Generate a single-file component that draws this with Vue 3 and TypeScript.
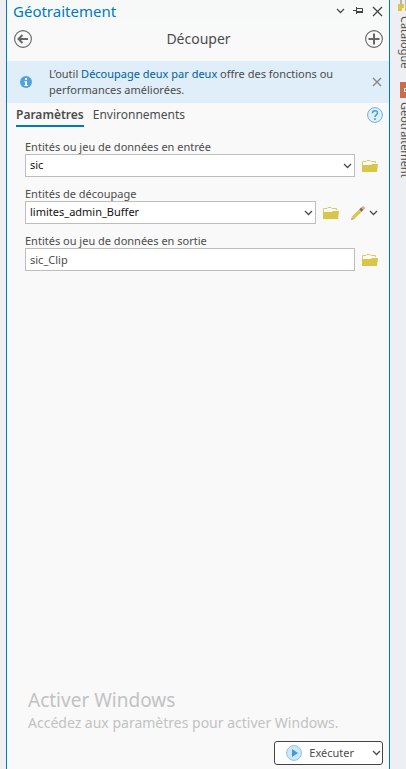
<script setup lang="ts">
import { ref } from 'vue'

const input = ref('sic')
const clip = ref('limites_admin_Buffer')
const output = ref('sic_Clip')
const activeTab = ref('Paramètres')
const tabs: string[] = ['Paramètres', 'Environnements']
const showNotice = ref(true)
</script>

<template>
  <svg class="defs" aria-hidden="true">
    <symbol id="folder" viewBox="0 0 16 12">
      <path d="M0.500 11V1.500H4L5 .5H8L9 1.500H13.500V3" fill="none" stroke="#dccb62" />
      <path d="M0 12V5H9L10 4H16L15 12Z" fill="#d9c548" />
    </symbol>
    <symbol id="chevron" viewBox="0 0 9 6">
      <path d="M1 1L4.500 4.500L8 1" fill="none" stroke="currentColor" stroke-width="1.300" />
    </symbol>
  </svg>
  <div class="dock">
    <main class="pane">
      <header class="titlebar">
        <h1>Géotraitement</h1>
        <button class="icon" aria-label="Options"><svg width="9" height="6"><use href="#chevron" /></svg></button>
        <button class="icon" aria-label="Épingler">
          <svg width="11" height="8" viewBox="0 0 11 8" fill="none" stroke="#444"><path d="M0 3.500H4" /><path d="M3.500 0V7" /><path d="M4 1.500H9.500V5" /><path d="M4 5H10" stroke-width="2" /></svg>
        </button>
        <button class="icon" aria-label="Fermer">
          <svg width="11" height="11" viewBox="0 0 11 11" fill="none" stroke="#444" stroke-width="1.300"><path d="M1 1L10 10M10 1L1 10" /></svg>
        </button>
      </header>

      <div class="toolbar">
        <button class="icon" aria-label="Précédent">
          <svg width="18" height="18" viewBox="0 0 18 18" fill="none" stroke="#666"><circle cx="9" cy="9" r="8.400" stroke-width="1.100" /><path d="M14 9H5M8.500 5L4.500 9L8.500 13" stroke-width="2" /></svg>
        </button>
        <h2>Découper</h2>
        <button class="icon" aria-label="Ajouter">
          <svg width="18" height="18" viewBox="0 0 18 18" fill="none" stroke="#666"><circle cx="9" cy="9" r="8.400" stroke-width="1.100" /><path d="M9 3.500V14.500M3.500 9H14.500" stroke-width="2" /></svg>
        </button>
      </div>

      <section v-if="showNotice" class="notice">
        <svg class="info" width="12" height="12" viewBox="0 0 12 12"><circle cx="6" cy="6" r="6" fill="#4fa3dc" /><path d="M5 2H7V4H5ZM4.500 5H7V9H8V10H4.500V9H5V6H4.500Z" fill="#fff" /></svg>
        <p>L’outil <a href="#">Découpage deux par deux</a> offre des fonctions ou performances améliorées.</p>
        <button class="icon" aria-label="Masquer le message" @click="showNotice = false">
          <svg width="10" height="10" viewBox="0 0 10 10" fill="none" stroke="#888" stroke-width="1.400"><path d="M1 1L9 9M9 1L1 9" /></svg>
        </button>
      </section>

      <nav class="tabs">
        <button v-for="tab in tabs" :key="tab" class="tab" :class="{ active: tab === activeTab }" @click="activeTab = tab">{{ tab }}</button>
        <button class="icon help" aria-label="Aide">
          <svg width="16" height="16" viewBox="0 0 16 16"><circle cx="8" cy="8" r="7.400" fill="#dff0fb" stroke="#6bb2e2" /><path d="M5.500 6.200C5.500 2.900 10.500 2.900 10.500 6C10.500 8 8 7.800 8 10" fill="none" stroke="#469cd6" stroke-width="1.500" /><path d="M7.200 11.300H8.800V13H7.200Z" fill="#469cd6" /></svg>
        </button>
      </nav>

      <form class="form" @submit.prevent>
        <div class="field">
          <label for="in">Entités ou jeu de données en entrée</label>
          <div class="row">
            <div class="combo">
              <select id="in" v-model="input"><option>sic</option></select>
              <svg width="9" height="6"><use href="#chevron" /></svg>
            </div>
            <button class="icon" type="button" aria-label="Parcourir"><svg width="16" height="12"><use href="#folder" /></svg></button>
          </div>
        </div>
        <div class="field">
          <label for="clip">Entités de découpage</label>
          <div class="row">
            <div class="combo">
              <select id="clip" v-model="clip"><option>limites_admin_Buffer</option></select>
              <svg width="9" height="6"><use href="#chevron" /></svg>
            </div>
            <button class="icon" type="button" aria-label="Parcourir"><svg width="16" height="12"><use href="#folder" /></svg></button>
            <button class="icon edit" type="button" aria-label="Modifier">
              <svg width="14" height="14" viewBox="0 0 14 14"><path d="M2 12L10 4" stroke="#d9c548" stroke-width="3.200" /><path d="M0 14L.8 11L3 13.200Z" fill="#b79a72" /><path d="M9.500 4.500L11.500 2.500" stroke="#6b6b6b" stroke-width="3.200" /><path d="M11.200 2.800L13.200 .8" stroke="#e6aa9c" stroke-width="3.200" /></svg>
              <svg width="9" height="6"><use href="#chevron" /></svg>
            </button>
          </div>
        </div>
        <div class="field">
          <label for="out">Entités ou jeu de données en sortie</label>
          <div class="row">
            <input id="out" v-model="output" type="text" />
            <button class="icon" type="button" aria-label="Parcourir"><svg width="16" height="12"><use href="#folder" /></svg></button>
          </div>
        </div>
      </form>

      <div class="watermark">
        <p class="big">Activer Windows</p>
        <p>Accédez aux paramètres pour activer Windows.</p>
      </div>

      <footer class="footer">
        <div class="run">
          <button class="go">
            <svg width="16" height="16" viewBox="0 0 16 16"><circle cx="8" cy="8" r="7.400" fill="#cfe8f8" stroke="#86c2e9" /><path d="M6 4L12 8L6 12Z" fill="#3f9ad6" /></svg>
            Exécuter
          </button>
          <button class="icon" aria-label="Options d’exécution"><svg width="9" height="6"><use href="#chevron" /></svg></button>
        </div>
      </footer>
    </main>

    <aside class="rail">
      <button class="side">
        <svg width="16" height="12" viewBox="0 0 16 12"><path d="M3 0V4M8 0V4" stroke="#777" /><path d="M0 4H6V8H4V11H0ZM7 4H16V11H7Z" fill="#d9c548" /></svg>
        Catalogue
      </button>
      <button class="side">
        <svg width="16" height="16" viewBox="0 0 16 16"><path d="M2 0H16V16H2Z" fill="#cd6a48" /><path d="M6.500 6.500H12.500V9.500H6.500Z" fill="none" stroke="#fff" /></svg>
        Géotraitement
      </button>
    </aside>
  </div>
</template>

<style>
body {
  margin: 0;
  background: #eeeff2;
}
</style>

<style scoped>
.defs {
  position: absolute;
  width: 0;
  height: 0;
}
.dock {
  display: flex;
  box-sizing: border-box;
  min-height: 100vh;
  padding-left: 6px;
  overflow: hidden;
  font-family: "Noto Sans", "Open Sans", sans-serif;
  font-size: 11px;
  line-height: 16px;
  color: #4c4c4c;
}
h1, h2, p {
  margin: 0;
  font-weight: 400;
}
button, input, select {
  margin: 0;
  padding: 0;
  font: inherit;
  color: inherit;
  border: 0;
  background: none;
}
svg {
  display: block;
  flex: none;
}
.icon {
  display: flex;
  align-items: center;
  flex: none;
}
.pane {
  display: flex;
  flex-direction: column;
  flex: 1;
  min-width: 0;
  background: #f9f9f9;
  border-left: 1px solid #0079c1;
  border-right: 1px solid #0079c1;
}
.titlebar {
  display: flex;
  align-items: center;
  gap: 8px;
  height: 22px;
  padding: 0 6px;
  background: #f7f9f8;
}
.titlebar h1 {
  flex: 1;
  font-size: 15px;
  line-height: 22px;
  color: #0079c1;
}
.toolbar {
  display: flex;
  align-items: center;
  height: 34px;
  padding: 0 6px 5px 7px;
}
.toolbar h2 {
  flex: 1;
  text-align: center;
  font-size: 14px;
  line-height: 22px;
}
.notice {
  display: flex;
  align-items: center;
  height: 42px;
  padding: 0 7px 0 13px;
  background: #dfeef8;
}
.notice p {
  flex: 1;
  padding: 0 16px 0 17px;
}
.notice a {
  color: #00619b;
  text-decoration: none;
}
.tabs {
  display: flex;
  align-items: center;
  gap: 9px;
  height: 24px;
  padding: 0 6px 0 9px;
  font-size: 12px;
}
.tab {
  height: 24px;
  padding-top: 2px;
  border-bottom: 2px solid transparent;
}
.tab.active {
  font-weight: 600;
  border-color: #0079c1;
}
.help {
  margin-left: auto;
}
.form {
  display: flex;
  flex-direction: column;
  gap: 9px;
  padding: 12px 11px 0 18px;
}
.field label {
  display: block;
  height: 15px;
  line-height: 16px;
}
.row {
  display: flex;
  align-items: center;
  gap: 7px;
}
.combo {
  position: relative;
  flex: 1;
}
.combo svg {
  position: absolute;
  right: 3px;
  top: 9px;
  pointer-events: none;
}
select, input {
  display: block;
  box-sizing: border-box;
  width: 100%;
  height: 23px;
  padding: 0 4px 1px;
  border: 1px solid #bdbdbd;
  border-radius: 0;
  background: #fff;
  appearance: none;
}
select {
  color: #111;
}
input {
  flex: 1;
  min-width: 0;
}
.edit {
  gap: 4px;
  margin-left: 5px;
}
.watermark {
  margin-top: auto;
  padding: 0 21px 8px;
  font-size: 14px;
  line-height: 20px;
  color: #c2c2c2;
}
.watermark .big {
  font-size: 19px;
  line-height: 26px;
}
.footer {
  display: flex;
  justify-content: flex-end;
  padding: 0 6px 4px;
}
.run {
  display: flex;
  box-sizing: border-box;
  height: 24px;
  padding: 0 1px 0 11px;
  border: 1px solid #444;
  border-radius: 3px;
  background: #fff;
}
.go {
  display: flex;
  align-items: center;
  gap: 7px;
  padding-right: 18px;
}
.rail {
  display: flex;
  flex-direction: column;
  gap: 13px;
  width: 16px;
  overflow: hidden;
}
.side {
  display: flex;
  align-items: flex-end;
  gap: 4px;
  width: 24px;
  padding-left: 8px;
  line-height: 14px;
  writing-mode: vertical-rl;
}
</style>
